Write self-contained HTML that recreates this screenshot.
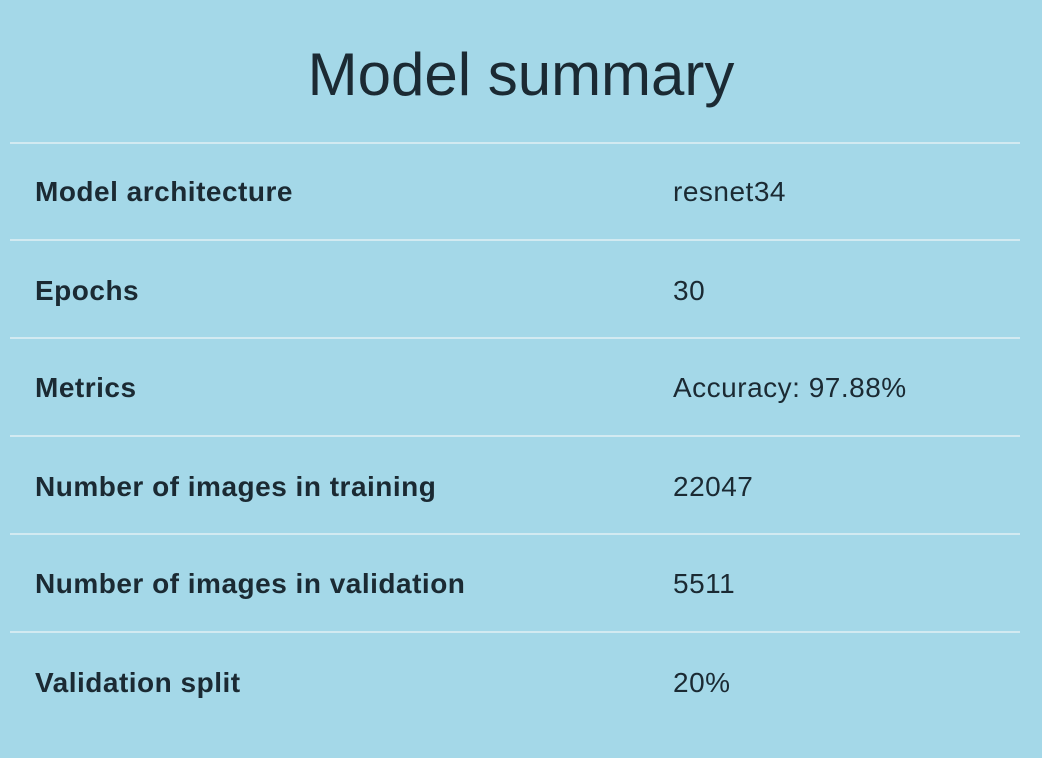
<!DOCTYPE html>
<html><head><style>
html,body{margin:0;padding:0;}
body{width:1042px;height:758px;background:#a4d8e8;font-family:"Liberation Sans",sans-serif;color:#1b2a33;position:relative;overflow:hidden;}
h1{position:absolute;top:35px;left:0;width:1042px;text-align:center;margin:0;font-weight:normal;font-size:60px;line-height:80px;letter-spacing:0px;}
.line{position:absolute;left:10px;width:1010px;height:2px;background:#d2eaf1;}
.l{position:absolute;left:35px;font-size:28px;font-weight:bold;line-height:30px;letter-spacing:0.5px;}
.v{position:absolute;left:673px;font-size:28px;line-height:30px;letter-spacing:0.5px;}
</style></head><body>
<h1>Model summary</h1>
<div class="line" style="top:142px"></div>
<div class="line" style="top:239px"></div>
<div class="line" style="top:337px"></div>
<div class="line" style="top:435px"></div>
<div class="line" style="top:533px"></div>
<div class="line" style="top:631px"></div>
<div class="l" style="top:177px">Model architecture</div><div class="v" style="top:177px">resnet34</div>
<div class="l" style="top:276px">Epochs</div><div class="v" style="top:276px">30</div>
<div class="l" style="top:373px">Metrics</div><div class="v" style="top:373px">Accuracy: 97.88%</div>
<div class="l" style="top:472px">Number of images in training</div><div class="v" style="top:472px">22047</div>
<div class="l" style="top:569px">Number of images in validation</div><div class="v" style="top:569px">5511</div>
<div class="l" style="top:668px">Validation split</div><div class="v" style="top:668px">20%</div>
</body></html>
